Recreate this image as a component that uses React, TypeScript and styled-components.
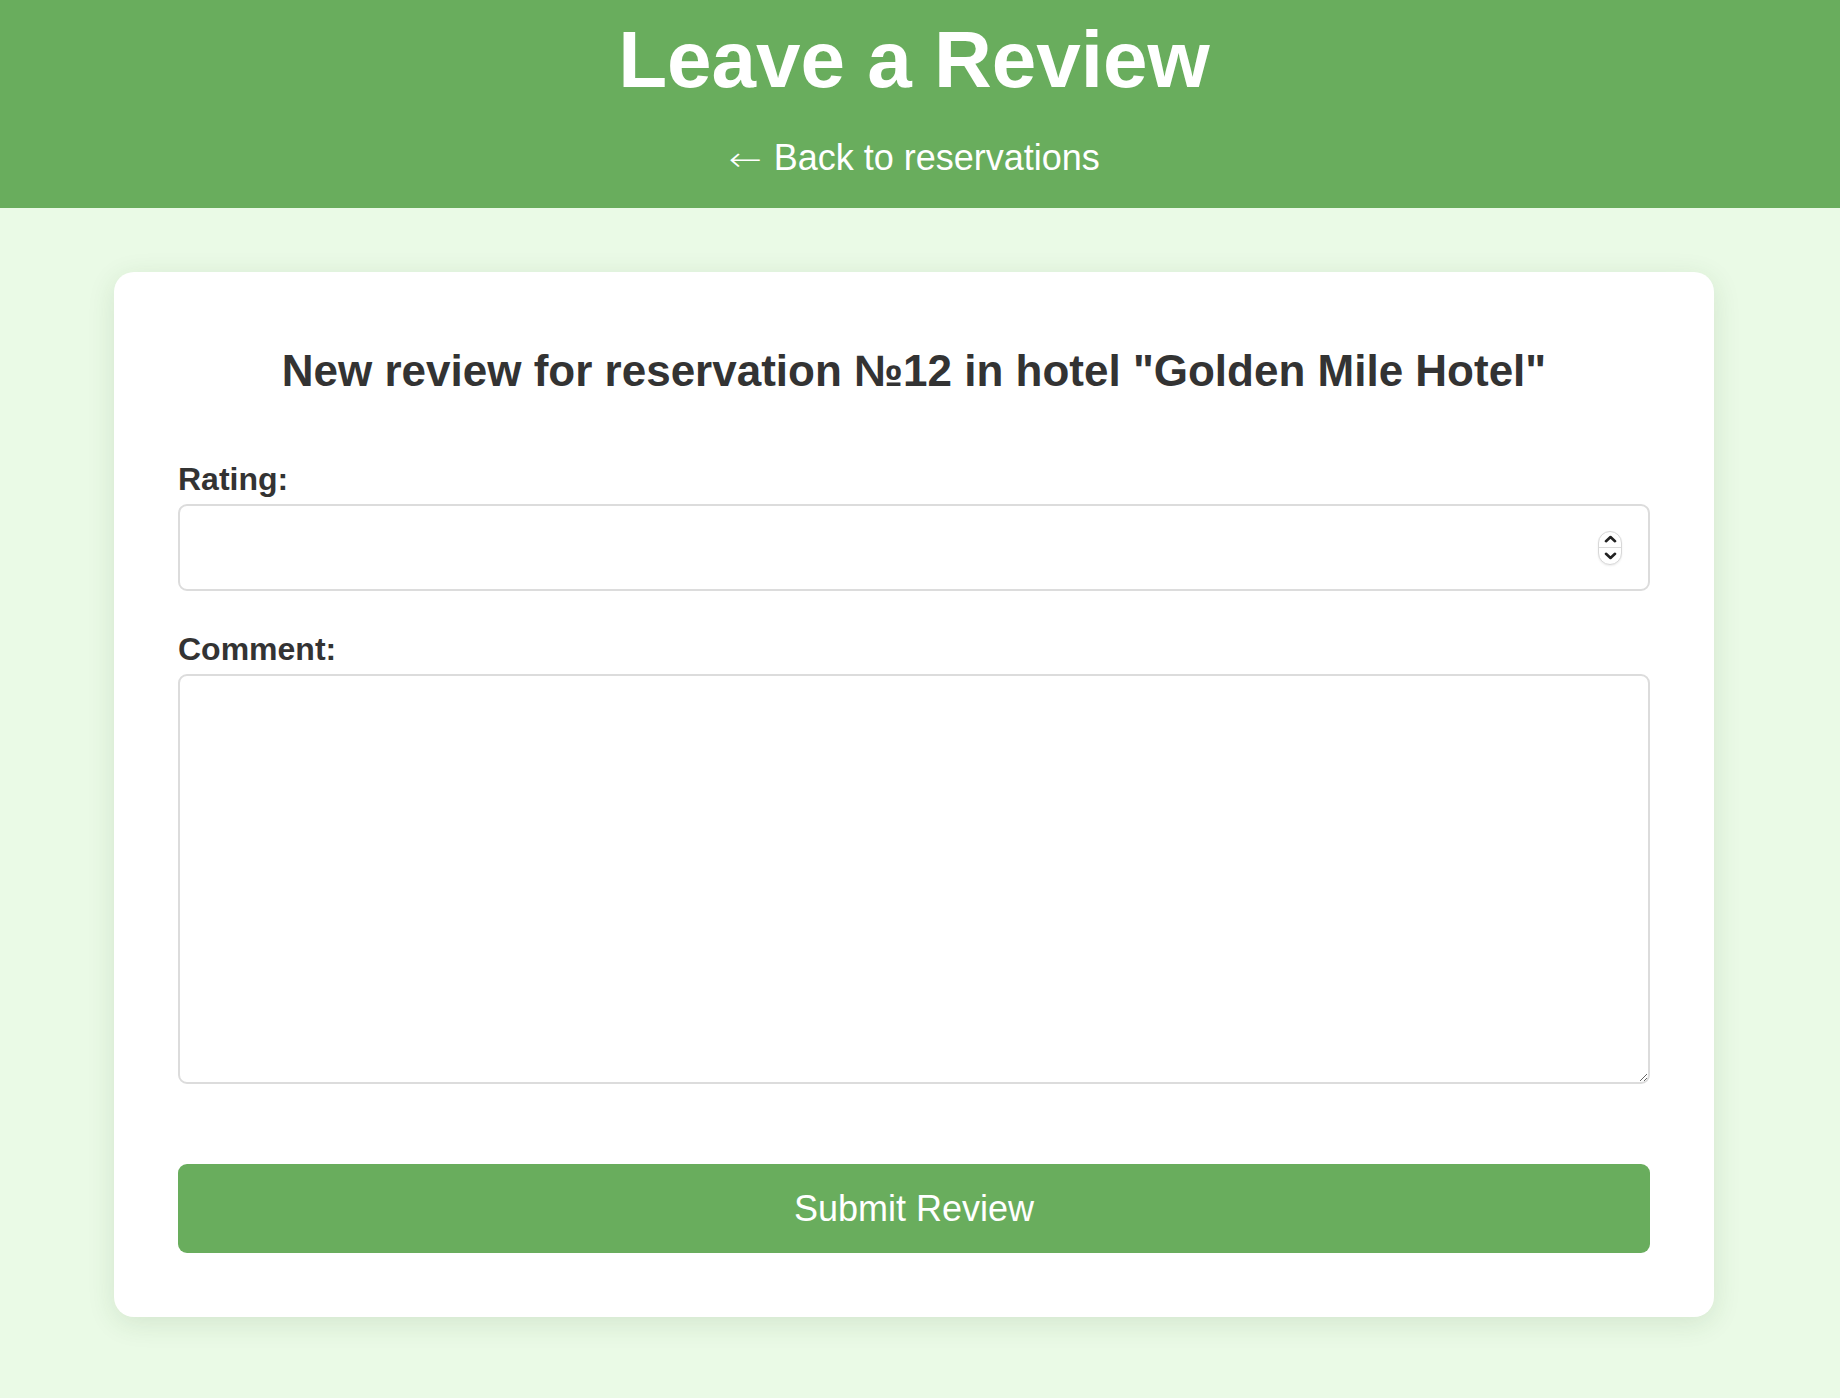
import styled, { createGlobalStyle } from "styled-components"

const GlobalStyle = createGlobalStyle`
  html, body {
    margin: 0;
    padding: 0;
    background-color: #eafae6;
    font-family: "Liberation Sans", Arial, Helvetica, sans-serif;
  }
`

const Page = styled.div`
  min-height: 1398px;
  background-color: #eafae6;
`

// content is centred a few pixels left of the window middle, as in the reference
const Header = styled.header`
  display: flex;
  flex-direction: column;
  align-items: center;
  background-color: #69ad5d;
  padding: 14px 12px 30px 0;
  color: #fff;
`

const Title = styled.h1`
  margin: 0 0 31px;
  font-size: 80px;
  line-height: 92px;
  font-weight: 700;
`

const BackLink = styled.a`
  display: flex;
  align-items: center;
  gap: 12px;
  color: #fff;
  text-decoration: none;
  font-size: 36px;
  line-height: 41px;
`

const Arrow = styled.span`
  font-family: "DejaVu Sans", sans-serif;
  font-size: 40px;
  line-height: 41px;
  font-weight: 300;
  transform: translateY(2px) scaleY(0.85);
`

const Main = styled.main`
  display: flex;
  justify-content: center;
  padding: 64px 12px 0 0;
`

const Card = styled.section`
  box-sizing: border-box;
  width: 1600px;
  background-color: #fff;
  border-radius: 20px;
  padding: 64px;
  box-shadow: 0 6px 28px rgba(40, 80, 30, 0.12);
`

const Heading = styled.h2`
  margin: 9px 0 64px;
  text-align: center;
  color: #333;
  font-size: 44px;
  line-height: 52px;
  font-weight: 700;
`

const Form = styled.form`
  display: flex;
  flex-direction: column;
`

const Label = styled.label`
  display: block;
  color: #333;
  font-size: 32px;
  line-height: 37px;
  font-weight: 700;
  margin-bottom: 6px;
`

const Field = styled.div<{ $gap: number }>`
  display: flex;
  flex-direction: column;
  margin-bottom: ${p => p.$gap}px;
`

const InputWrap = styled.div`
  position: relative;
`

const NumberInput = styled.input`
  box-sizing: border-box;
  width: 100%;
  height: 87px;
  border: 2px solid #dcdcdc;
  border-radius: 9px;
  padding: 0 20px;
  font-size: 32px;
  font-family: inherit;
  outline: none;
  -moz-appearance: textfield;
  &::-webkit-inner-spin-button,
  &::-webkit-outer-spin-button {
    -webkit-appearance: none;
    margin: 0;
  }
`

const Spinner = styled.div`
  position: absolute;
  right: 28px;
  top: 50%;
  transform: translateY(-50%);
  width: 24px;
  height: 34px;
  box-sizing: border-box;
  border: 1px solid #d8d8d8;
  border-radius: 12px;
  background: #fff;
  display: flex;
  flex-direction: column;
  box-shadow: 0 1px 2px rgba(0, 0, 0, 0.08);
  > span {
    flex: 1;
    display: flex;
    align-items: center;
    justify-content: center;
  }
  > span + span {
    border-top: 1px solid #dcdcdc;
  }
`

const TextArea = styled.textarea`
  box-sizing: border-box;
  width: 100%;
  height: 410px;
  border: 2px solid #dcdcdc;
  border-radius: 9px;
  padding: 16px 20px;
  font-size: 32px;
  font-family: inherit;
  resize: vertical;
  outline: none;
`

const SubmitButton = styled.button`
  height: 89px;
  width: 100%;
  border: none;
  border-radius: 9px;
  background-color: #69ad5d;
  color: #fff;
  font-family: inherit;
  font-size: 36px;
  cursor: pointer;
`

export default function App() {
  return (
    <Page>
      <GlobalStyle />
      <Header>
        <Title>Leave a Review</Title>
        <BackLink href="#"><Arrow>←</Arrow>Back to reservations</BackLink>
      </Header>
      <Main>
        <Card>
          <Heading>New review for reservation №12 in hotel "Golden Mile Hotel"</Heading>
          <Form onSubmit={e => e.preventDefault()}>
            <Field $gap={40}>
              <Label htmlFor="rating">Rating:</Label>
              <InputWrap>
                <NumberInput id="rating" type="number" min={1} max={5} />
                <Spinner>
                  <span>
                    <svg width="13" height="8" viewBox="0 0 13 8" fill="none">
                      <path d="M2 6.2L6.5 2L11 6.2" stroke="#222" strokeWidth="2.6" strokeLinecap="round" strokeLinejoin="round" />
                    </svg>
                  </span>
                  <span>
                    <svg width="13" height="8" viewBox="0 0 13 8" fill="none">
                      <path d="M2 1.8L6.5 6L11 1.8" stroke="#222" strokeWidth="2.6" strokeLinecap="round" strokeLinejoin="round" />
                    </svg>
                  </span>
                </Spinner>
              </InputWrap>
            </Field>
            <Field $gap={80}>
              <Label htmlFor="comment">Comment:</Label>
              <TextArea id="comment" />
            </Field>
            <SubmitButton type="submit">Submit Review</SubmitButton>
          </Form>
        </Card>
      </Main>
    </Page>
  )
}
